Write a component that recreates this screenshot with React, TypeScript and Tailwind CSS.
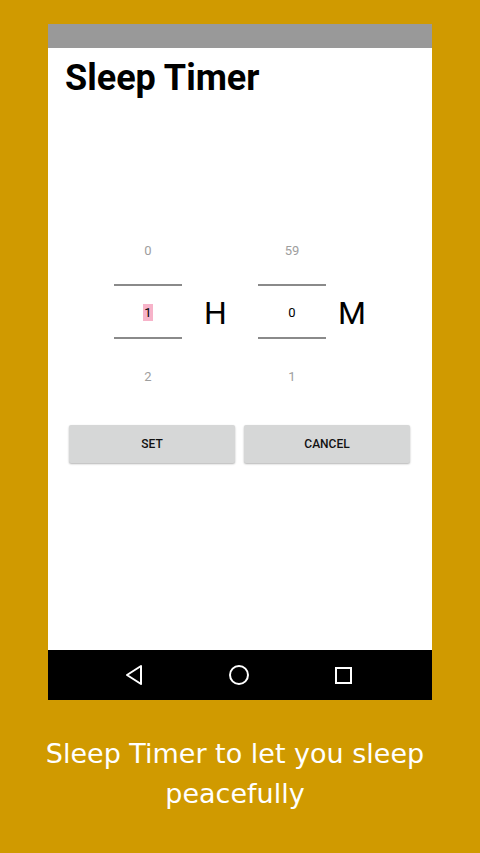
import React from 'react';

const Picker: React.FC<{ prev: string; value: string; next: string; highlight?: boolean }> = ({ prev, value, next, highlight }) => (
  <div className="flex w-[68px] flex-col items-center">
    <div className="flex h-[66px] items-center text-[13px] text-[#9e9e9e]">{prev}</div>
    <div className="flex h-[55px] w-full flex-col justify-between">
      <div className="h-[2px] bg-[#8a8a8a]" />
      <div className="flex justify-center pt-[2px] text-[13px] text-black">
        <span className={highlight ? 'bg-[#f7b3c9] px-[1px] leading-[17px]' : 'leading-[17px]'}>{value}</span>
      </div>
      <div className="h-[2px] bg-[#8a8a8a]" />
    </div>
    <div className="flex h-[76px] items-center text-[13px] text-[#9e9e9e]">{next}</div>
  </div>
);

const App: React.FC = () => {
  return (
    <div className="flex h-[853px] w-[480px] flex-col items-center bg-[#d09a00] font-['Roboto',sans-serif]">
      <div className="mt-[24px] flex h-[676px] w-[384px] flex-col">
        <div className="h-[24px] bg-[#999999]" />
        <div className="flex flex-1 flex-col bg-white">
          <h1 className="ml-[17px] mt-[8px] text-[36px] font-bold leading-[44px] text-black">Sleep Timer</h1>

          <div className="mt-[118px] flex pl-[66px]">
            <Picker prev="0" value="1" next="2" highlight />
            <div className="mt-[66px] flex h-[55px] w-[76px] items-center pl-[22px] pt-[2px] text-[32px] text-black">H</div>
            <Picker prev="59" value="0" next="1" />
            <div className="mt-[66px] flex h-[55px] w-[54px] items-center pl-[12px] pt-[2px] text-[32px] text-black">M</div>
          </div>

          <div className="mt-[10px] flex gap-[9px] px-[21px]">
            <button className="h-[38px] w-[166px] rounded-[2px] bg-[#d6d7d7] text-[12px] font-medium text-[#111] shadow-[0_1px_2px_rgba(0,0,0,0.3)]">
              SET
            </button>
            <button className="h-[38px] w-[166px] rounded-[2px] bg-[#d6d7d7] text-[12px] font-medium text-[#111] shadow-[0_1px_2px_rgba(0,0,0,0.3)]">
              CANCEL
            </button>
          </div>
        </div>
        <div className="flex h-[50px] items-center gap-[84px] bg-black pl-[76px]">
          <svg width="20" height="22" viewBox="0 0 20 22" fill="none" stroke="white" strokeWidth="2">
            <path d="M17 2 L3 11 L17 20 Z" strokeLinejoin="round" />
          </svg>
          <svg width="22" height="22" viewBox="0 0 22 22" fill="none" stroke="white" strokeWidth="2">
            <circle cx="11" cy="11" r="9" />
          </svg>
          <svg width="19" height="19" viewBox="0 0 19 19" fill="none" stroke="white" strokeWidth="2">
            <rect x="2" y="2" width="15" height="15" />
          </svg>
        </div>
      </div>
      <p className="mr-[10px] mt-[34px] w-[440px] text-center font-['DejaVu_Sans',sans-serif] text-[27px] leading-[40px] text-white">
        Sleep Timer to let you sleep peacefully
      </p>
    </div>
  );
};

export default App;
